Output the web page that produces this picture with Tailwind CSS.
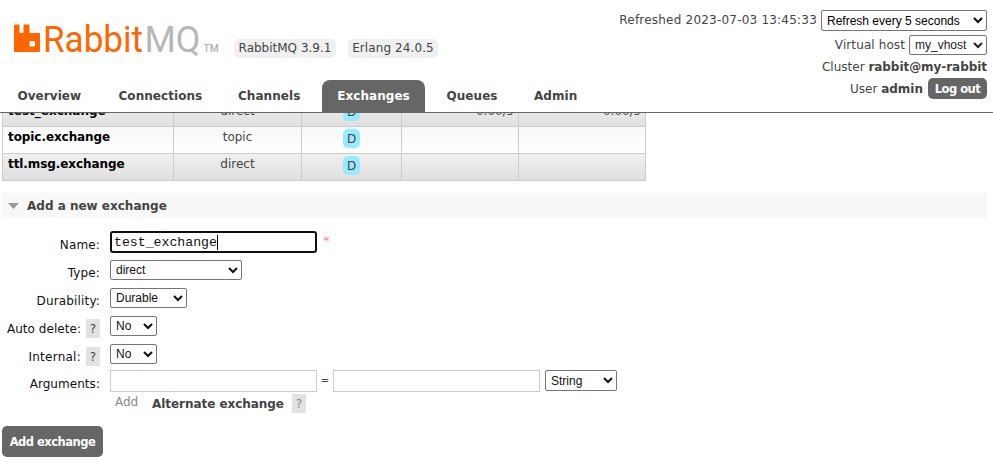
<!DOCTYPE html>
<html lang="en">
<head>
<meta charset="utf-8">
<title>RabbitMQ Management</title>
<script src="https://cdn.jsdelivr.net/npm/@tailwindcss/browser@4"></script>
</head>
<body class="w-[993px] h-[461px] overflow-hidden bg-white font-['DejaVu_Sans',Verdana,sans-serif] text-[12px] leading-[14px] text-[#444]">
<header class="flex h-[113px] justify-between border-b border-[#666] pl-[2px] pr-[6px]">
  <div class="flex flex-col justify-between">
    <div class="flex pl-3 pt-[20px]">
      <svg class="mr-[14px]" width="206" height="38" viewBox="14 20 206 38" role="img" aria-label="RabbitMQ">
        <path fill="#f60" fill-rule="evenodd" d="M15 24.500h3.500q1 0 1 1v6.500q0 1 1 1h2q1 0 1-1v-6.500q0-1 1-1h4q1 0 1 1v6.500q0 1 1 1h8.500q1 0 1 1V51q0 1-1 1H15q-1 0-1-1V25.500q0-1 1-1zM30.500 41h3.500q1 0 1 1v3.500q0 1-1 1h-3.500q-1 0-1-1V42q0-1 1-1z"/>
        <text x="43" y="52" fill="#f60" font-family="Roboto, sans-serif" font-size="37.500" textLength="100" lengthAdjust="spacingAndGlyphs">Rabbit</text>
        <text x="144.500" y="52" fill="#b7b7b7" font-family="Roboto, sans-serif" font-size="37.500" textLength="56" lengthAdjust="spacingAndGlyphs">MQ</text>
        <text x="203.500" y="52" fill="#b0b0b0" font-family="Roboto, sans-serif" font-weight="500" font-size="10.500" textLength="15" lengthAdjust="spacingAndGlyphs">TM</text>
      </svg>
      <div class="mt-[19px] flex h-[19px] gap-3 whitespace-nowrap leading-[19px]">
        <span class="w-[102px] rounded-[5px] bg-[#f0f0f0] text-center">RabbitMQ 3.9.1</span>
        <span class="w-[90px] rounded-[5px] bg-[#f0f0f0] text-center tracking-[0.1px]">Erlang 24.0.5</span>
      </div>
    </div>
    <nav class="flex h-8 text-[12px] font-bold leading-[33px] tracking-[0.05px]">
      <a class="w-[101px] pl-[15.500px]">Overview</a>
      <a class="w-[119px] pl-[15.500px]">Connections</a>
      <a class="w-[100px] pl-[16px]">Channels</a>
      <a class="w-[103px] rounded-t-[8px] bg-[#666] text-center text-white">Exchanges</a>
      <a class="w-[94px] pl-[21.500px]">Queues</a>
      <a class="pl-[15px]">Admin</a>
    </nav>
  </div>
  <div class="flex flex-col items-end whitespace-nowrap pt-[10px]">
    <div class="flex h-[21px] items-center gap-1"><span class="-mt-[2px] tracking-[0.21px]">Refreshed 2023-07-03 13:45:33</span>
      <select class="h-[21px] w-[166px] rounded-[2px] border border-[#767676] bg-white pl-[1px] font-['Liberation_Sans',Arial,sans-serif] text-[12px] text-black"><option>Refresh every 5 seconds</option></select>
    </div>
    <div class="mt-1 flex h-5 items-center gap-1"><span class="tracking-[0.1px]">Virtual host</span>
      <select class="h-5 w-[78px] rounded-[2px] border border-[#767676] bg-white pl-[1px] font-['Liberation_Sans',Arial,sans-serif] text-[12px] text-[#222]"><option>my_vhost</option></select>
    </div>
    <div class="mt-1 h-[15px] leading-[17px]">Cluster <b class="tracking-[-0.05px]">rabbit@my-rabbit</b></div>
    <div class="mt-1 flex h-[21px] items-center">User&nbsp;<b>admin</b>
      <button class="ml-[5px] h-[21px] w-[59px] rounded-[5px] bg-[#666] text-[11.500px] font-bold tracking-[-0.5px] text-white">Log out</button>
    </div>
  </div>
</header>
<main class="pl-[2px] pr-[6px]">
  <div class="flex h-[68px] w-[644px] flex-col justify-end overflow-hidden border-x border-[#ccc]">
    <div class="grid h-[27px] shrink-0 grid-cols-[171px_128px_100px_117px_126px] divide-x divide-[#ccc] border-b border-[#ccc] bg-linear-to-b from-[#f0f0f0] to-[#e0e0e0]">
      <b class="pl-[5px] pt-1 text-black">test_exchange</b><span class="pt-1 text-center">direct</span><span class="flex justify-center pt-[2px]"><i class="h-[19px] w-[17px] rounded-[5px] bg-[#98ebff] text-center not-italic leading-[20px]">D</i></span><span class="pr-[5px] pt-1 text-right">0.00/s</span><span class="pr-[5px] pt-1 text-right">0.00/s</span>
    </div>
    <div class="grid h-[27px] shrink-0 grid-cols-[171px_128px_100px_117px_126px] divide-x divide-[#ccc] border-b border-[#ccc] bg-linear-to-b from-[#f8f8f8] to-white">
      <b class="pl-[5px] pt-[3px] tracking-[-0.08px] text-black">topic.exchange</b><span class="pt-[3px] text-center">topic</span><span class="flex justify-center pt-[2px]"><i class="h-[19px] w-[17px] rounded-[5px] bg-[#98ebff] text-center not-italic leading-[20px]">D</i></span><span></span><span></span>
    </div>
    <div class="grid h-[27px] shrink-0 grid-cols-[171px_128px_100px_117px_126px] divide-x divide-[#ccc] border-b border-[#ccc] bg-linear-to-b from-[#f0f0f0] to-[#dfdfdf]">
      <b class="pl-[5px] pt-[3px] tracking-[-0.08px] text-black">ttl.msg.exchange</b><span class="pt-[3px] text-center">direct</span><span class="flex justify-center pt-[2px]"><i class="h-[19px] w-[17px] rounded-[5px] bg-[#98ebff] text-center not-italic leading-[20px]">D</i></span><span></span><span></span>
    </div>
  </div>
  <h2 class="mt-3 flex h-[25px] items-center bg-[#f8f8f8] pl-[6px] text-[12px] font-bold">
    <svg class="mr-2" width="11" height="6" viewBox="0 0 11 6"><path fill="#999" d="M0 0h11L5.500 6z"/></svg>Add a new exchange
  </h2>
  <form class="mt-[10px] text-[#111]">
    <div class="flex h-7 items-center"><label class="mt-[5px] w-[98px] text-right tracking-[0.15px]">Name:</label>
      <div class="ml-[10px] flex h-[22px] w-[207px] items-center rounded-[3px] border-2 border-[#101010] pl-[2px] font-['Liberation_Mono','Courier_New',monospace] text-[13.200px]"><span class="h-[15px] border-r border-black leading-[15px]">test_exchange</span></div>
      <span class="-mt-[2px] ml-[6px] text-[13px] text-[#f88]">*</span></div>
    <div class="flex h-7 items-center"><label class="mt-[5px] w-[98px] text-right tracking-[0.15px]">Type:</label>
      <select class="ml-[10px] h-5 w-[132px] rounded-[2px] border border-[#767676] bg-white pl-[1px] font-['Liberation_Sans',Arial,sans-serif] text-[12px]"><option>direct</option></select></div>
    <div class="flex h-7 items-center"><label class="mt-[5px] w-[98px] text-right tracking-[0.15px]">Durability:</label>
      <select class="ml-[10px] h-5 w-[77px] rounded-[2px] border border-[#767676] bg-white pl-[1px] font-['Liberation_Sans',Arial,sans-serif] text-[12px]"><option>Durable</option></select></div>
    <div class="flex h-7 items-center"><label class="mt-[5px] w-[79px] whitespace-nowrap text-right tracking-[0.05px]">Auto delete:</label><span class="ml-[5px] mt-[5px] h-[19px] w-[14px] bg-[#e2e2e2] text-center leading-[20px] text-[#444]">?</span>
      <select class="ml-[10px] h-5 w-[47px] rounded-[2px] border border-[#767676] bg-white pl-[1px] font-['Liberation_Sans',Arial,sans-serif] text-[12px]"><option>No</option></select></div>
    <div class="flex h-7 items-center"><label class="mt-[5px] w-[79px] text-right tracking-[0.25px]">Internal:</label><span class="ml-[5px] mt-[5px] h-[19px] w-[14px] bg-[#e2e2e2] text-center leading-[20px] text-[#444]">?</span>
      <select class="ml-[10px] h-5 w-[47px] rounded-[2px] border border-[#767676] bg-white pl-[1px] font-['Liberation_Sans',Arial,sans-serif] text-[12px]"><option>No</option></select></div>
    <div class="mt-[2px] flex h-[22px] items-center"><label class="mt-[6px] w-[98px] text-right tracking-[0.05px]">Arguments:</label>
      <input class="ml-[10px] h-[22px] w-[207px] border border-[#ccc]"><span class="w-4 text-center text-[10px] text-[#444]">=</span><input class="h-[22px] w-[207px] border border-[#ccc]">
      <select class="-mt-px ml-[5px] h-[21px] w-[72px] rounded-[2px] border border-[#767676] bg-white pl-[1px] font-['Liberation_Sans',Arial,sans-serif] text-[12px]"><option>String</option></select></div>
    <div class="mt-[2px] flex h-[19px] pl-[113px]"><span class="w-[37px] pt-px text-[#888]">Add</span><b class="w-[140px] pt-[3px] tracking-[-0.05px] text-[#444]">Alternate exchange</b><span class="h-[19px] w-[14px] bg-[#e2e2e2] text-center leading-[20px] text-[#888]">?</span></div>
    <button type="button" class="mt-[13px] h-[31px] w-[101px] rounded-[5px] bg-[#666] text-center text-[11.500px] font-bold tracking-[-0.5px] text-white">Add exchange</button>
  </form>
</main>
</body>
</html>
